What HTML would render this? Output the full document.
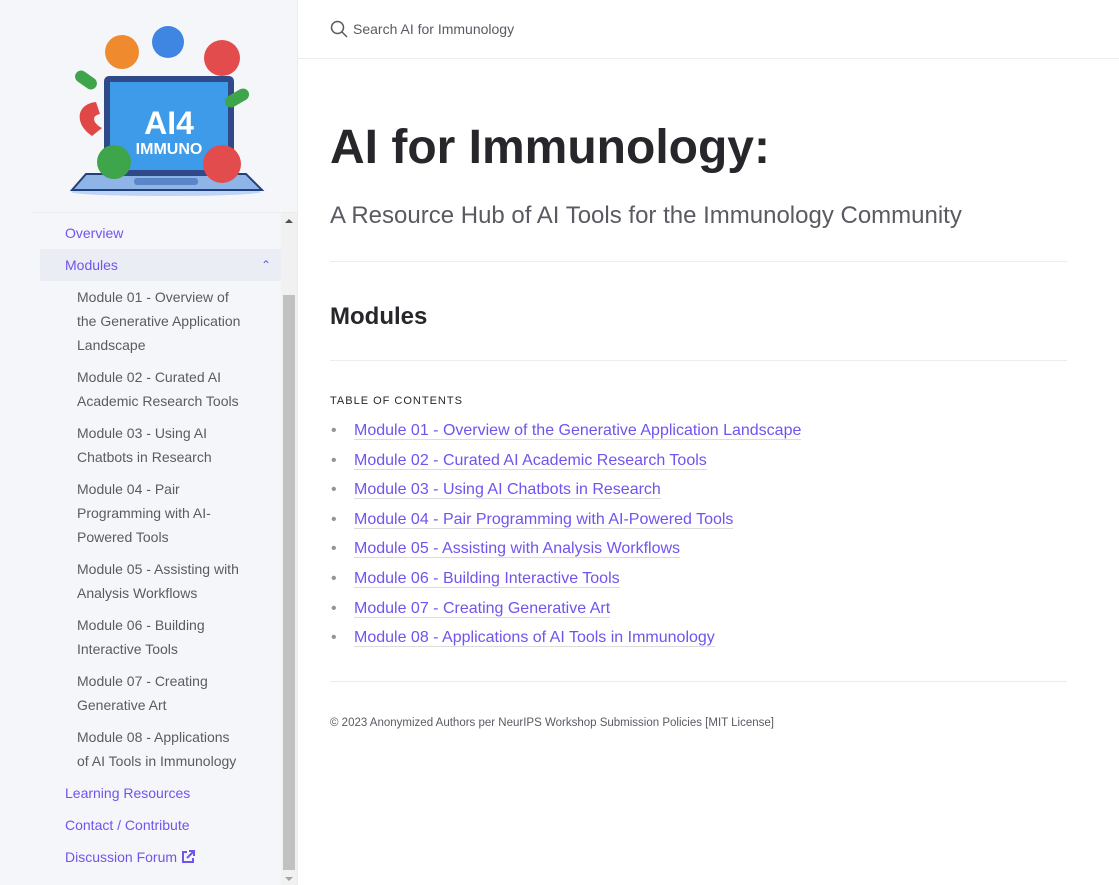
<!DOCTYPE html>
<html><head><meta charset="utf-8"><style>
*{box-sizing:border-box;margin:0;padding:0}
body{width:1119px;height:885px;overflow:hidden;font-family:"Liberation Sans",sans-serif;background:#fff;color:#5c5962;position:relative}
.side{position:absolute;left:0;top:0;width:298px;height:885px;background:#f5f6fa;border-right:1px solid #eeebee}
.logo{position:absolute;left:64px;top:14px}
.navline{position:absolute;left:32px;top:212px;width:266px;border-top:1px solid #eeebee}
.nav{position:absolute;left:32px;top:213px;width:249px;font-size:14px}
.nav a{display:block;color:#7253ed;text-decoration:none;padding-left:33px;height:32px;line-height:40px}
.nav .act{background:#ebedf5;margin-left:8px;padding-left:25px;position:relative;line-height:32px;margin-top:4px}
.nav .sub{color:#5c5962;padding-left:45px;line-height:24px;height:auto;padding-top:4px;padding-bottom:4px;padding-right:38px}
.sb{position:absolute;left:281px;top:213px;width:16px;height:672px;background:#f1f1f1}
.thumb{position:absolute;left:2px;top:82px;width:12px;height:575px;background:#c1c1c1}
.search{position:absolute;left:298px;top:0;width:821px;height:59px;border-bottom:1px solid #eeebee}
.search span{position:absolute;left:55px;top:21px;font-size:14px;color:#5c5962}
.main{position:absolute;left:330px;top:0;width:737px}
h1{position:absolute;top:120px;font-size:48px;font-weight:bold;color:#27262b;white-space:nowrap}
.subt{position:absolute;top:202px;font-size:24px;font-weight:300;color:#5c5962;white-space:nowrap}
hr{position:absolute;left:0;width:737px;border:0;border-top:1px solid #eeebee}
h2{position:absolute;top:303px;font-size:24px;font-weight:bold;color:#27262b}
.toc{position:absolute;top:395px;font-size:11px;letter-spacing:1px;color:#27262b}
ul{position:absolute;top:422px;list-style:none;font-size:16px}
li{height:29.6px;position:relative;padding-left:24px}
li:before{content:"•";position:absolute;left:1px;color:#959396}
li a{color:#7253ed;text-decoration:none;border-bottom:1px solid #dcdcdc}
.foot{position:absolute;top:717px;font-size:11.5px;color:#5c5962;white-space:nowrap}
</style></head><body>
<div class="side">
<svg class="logo" width="204" height="182" viewBox="0 0 204 182">
<ellipse cx="102" cy="178" rx="95" ry="4" fill="#bcd4f5"/>
<path d="M22 160 L182 160 L198 176 L8 176 Z" fill="#8fb5e8" stroke="#24407a" stroke-width="2"/>
<rect x="70" y="164" width="64" height="7" rx="3" fill="#5a86c8"/>
<rect x="40" y="62" width="130" height="100" rx="5" fill="#2f4a86"/>
<rect x="46" y="68" width="118" height="88" fill="#3d9be9"/>
<text x="105" y="120" text-anchor="middle" font-family="Liberation Sans" font-weight="bold" font-size="32" fill="#fff">AI4</text>
<text x="105" y="140" text-anchor="middle" font-family="Liberation Sans" font-weight="bold" font-size="16" fill="#fff">IMMUNO</text>
<circle cx="58" cy="38" r="17" fill="#ef8a2f"/>
<circle cx="104" cy="28" r="16" fill="#3f86e3"/>
<circle cx="158" cy="44" r="18" fill="#e24c4c"/>
<circle cx="50" cy="148" r="17" fill="#3ea54a"/>
<circle cx="158" cy="150" r="19" fill="#e24c4c"/>
<path d="M28 122 C10 110 12 90 32 88 L36 100 C26 102 30 110 38 114 Z" fill="#e04747"/>
<rect x="10" y="60" width="24" height="12" rx="6" fill="#3ea54a" transform="rotate(35 22 66)"/>
<rect x="160" y="78" width="26" height="12" rx="6" fill="#3ea54a" transform="rotate(-30 173 84)"/>
</svg>
<div class="navline"></div>
<div class="nav">
<a>Overview</a>
<a class="act">Modules<span style="position:absolute;right:10px;top:0;font-size:12px">&#8963;</span></a>
<a class="sub">Module 01 - Overview of the Generative Application Landscape</a>
<a class="sub">Module 02 - Curated AI Academic Research Tools</a>
<a class="sub">Module 03 - Using AI Chatbots in Research</a>
<a class="sub">Module 04 - Pair Programming with AI-Powered Tools</a>
<a class="sub">Module 05 - Assisting with Analysis Workflows</a>
<a class="sub">Module 06 - Building Interactive Tools</a>
<a class="sub">Module 07 - Creating Generative Art</a>
<a class="sub">Module 08 - Applications of AI Tools in Immunology</a>
<a style="line-height:24px;padding-top:4px">Learning Resources</a>
<a style="line-height:24px;padding-top:4px">Contact / Contribute</a>
<a style="line-height:24px;padding-top:4px">Discussion Forum <svg width="14" height="14" viewBox="0 0 14 14" style="vertical-align:-2px"><path d="M6 2H2v10h10V8M8 1h5v5M13 1L6 8" fill="none" stroke="#7253ed" stroke-width="2"/></svg></a>
</div>
<div class="sb"><div class="thumb"></div><div style="position:absolute;left:4px;top:6px;border:4px solid transparent;border-bottom:4px solid #505050;border-top:0"></div><div style="position:absolute;left:4px;bottom:4px;border:4px solid transparent;border-top:4px solid #a3a3a3;border-bottom:0"></div></div>
</div>
<div class="search"><svg style="position:absolute;left:32px;top:20px" width="18" height="18" viewBox="0 0 18 18"><circle cx="7.5" cy="7.5" r="6" fill="none" stroke="#5c5962" stroke-width="1.5"/><path d="M12 12l5 5" stroke="#5c5962" stroke-width="1.5"/></svg><span>Search AI for Immunology</span></div>
<div class="main">
<h1>AI for Immunology:</h1>
<div class="subt">A Resource Hub of AI Tools for the Immunology Community</div>
<hr style="top:261px">
<h2>Modules</h2>
<hr style="top:360px">
<div class="toc">TABLE OF CONTENTS</div>
<ul>
<li><a>Module 01 - Overview of the Generative Application Landscape</a></li>
<li><a>Module 02 - Curated AI Academic Research Tools</a></li>
<li><a>Module 03 - Using AI Chatbots in Research</a></li>
<li><a>Module 04 - Pair Programming with AI-Powered Tools</a></li>
<li><a>Module 05 - Assisting with Analysis Workflows</a></li>
<li><a>Module 06 - Building Interactive Tools</a></li>
<li><a>Module 07 - Creating Generative Art</a></li>
<li><a>Module 08 - Applications of AI Tools in Immunology</a></li>
</ul>
<hr style="top:681px">
<div class="foot">© 2023 Anonymized Authors per NeurIPS Workshop Submission Policies [MIT License]</div>
</div>
</body></html>
